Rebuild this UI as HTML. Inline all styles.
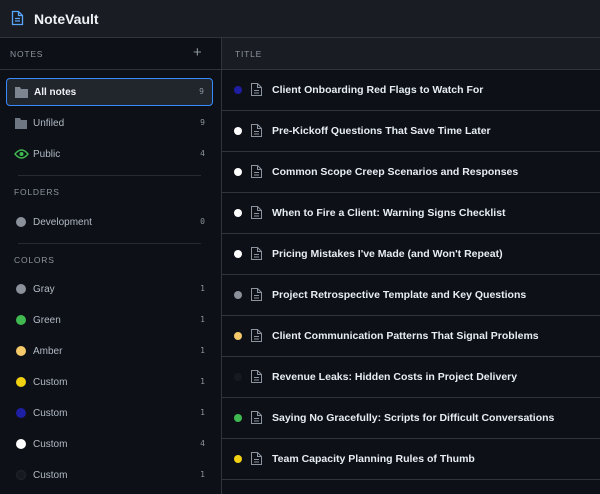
<!DOCTYPE html>
<html><head><style>
*{margin:0;padding:0;box-sizing:border-box}
body{width:600px;height:494px;overflow:hidden;background:#0d1017;font-family:"Liberation Sans","DejaVu Sans",sans-serif;color:#c9d1d9;position:relative}
.top{position:absolute;left:0;top:0;width:600px;height:38px;background:#191c23;border-bottom:1px solid #30343b}
.top .t{position:absolute;left:34px;top:11px;font-size:14px;font-weight:bold;color:#f0f3f6}
.side{position:absolute;left:0;top:38px;width:222px;height:456px;border-right:1px solid #30343b}
.sh{height:32px;border-bottom:1px solid #30343b;position:relative}
.lab{position:absolute;font-size:8.5px;letter-spacing:.8px;color:#8b949e}
.it{position:absolute;left:6px;width:207px;height:28px;font-size:10px;color:#b1bac4}
.it .n{position:absolute;left:27px;top:9px}
.it .c{position:absolute;right:8px;top:9px;font-family:"DejaVu Sans Mono",monospace;font-size:8px;color:#8b949e}
.dot{position:absolute;left:10px;top:9px;width:10px;height:10px;border-radius:50%}
.sep{position:absolute;left:18px;width:183px;height:1px;background:#262a31}
.main{position:absolute;left:222px;top:38px;width:378px;height:456px}
.th{height:32px;background:#191c23;border-bottom:1px solid #30343b;position:relative}
.row{height:41px;border-bottom:1px solid #30343b;position:relative}
.row .d{position:absolute;left:12px;top:16px;width:8px;height:8px;border-radius:50%}
.row svg{position:absolute;left:29px;top:13px}
.row .x{position:absolute;left:50px;top:14px;font-size:10.5px;font-weight:bold;color:#e6edf3}
</style></head><body>
<div class="top">
<svg style="position:absolute;left:11px;top:10px" width="13" height="16" viewBox="0 0 13 16"><path d="M1.5 1.5h6l4 4v9h-10z M7.5 1.5v4h4 M4 8.5h5 M4 11h5" fill="none" stroke="#58a6ff" stroke-width="1.3"/></svg>
<div class="t">NoteVault</div></div>
<div class="side">
<div class="sh"><span class="lab" style="left:10px;top:11px">NOTES</span><span style="position:absolute;left:193px;top:6px;font-size:15px;color:#8b949e">+</span></div>
<div class="it" style="top:40px;background:#21262d;border:1px solid #388bfd;border-radius:4px"><svg style="position:absolute;left:8px;top:8px" width="13" height="11"><path d="M0 0h5l1 2h7v9h-13z" fill="#7d8590"/></svg><span class="n" style="color:#f0f3f6;font-weight:bold;top:8px">All notes</span><span class="c" style="top:8px">9</span></div>
<div class="it" style="top:71px"><svg style="position:absolute;left:9px;top:9px" width="12" height="11"><path d="M0 0h5l1 2h6v9h-12z" fill="#6e7681"/></svg><span class="n">Unfiled</span><span class="c">9</span></div>
<div class="it" style="top:102px"><svg style="position:absolute;left:8px;top:9px" width="15" height="10"><path d="M1 5Q7.5-3 14 5Q7.5 13 1 5z" fill="none" stroke="#3fb950" stroke-width="1.4"/><circle cx="7.5" cy="5" r="2" fill="#3fb950"/></svg><span class="n">Public</span><span class="c">4</span></div>
<div class="sep" style="top:137px"></div>
<span class="lab" style="left:14px;top:149px">FOLDERS</span>
<div class="it" style="top:170px"><span class="dot" style="background:#8b919a"></span><span class="n">Development</span><span class="c">0</span></div>
<div class="sep" style="top:205px"></div>
<span class="lab" style="left:14px;top:217px">COLORS</span>
<div class="it" style="top:237px"><span class="dot" style="background:#8b919a"></span><span class="n">Gray</span><span class="c">1</span></div>
<div class="it" style="top:268px"><span class="dot" style="background:#3fb950"></span><span class="n">Green</span><span class="c">1</span></div>
<div class="it" style="top:299px"><span class="dot" style="background:#f5c86a"></span><span class="n">Amber</span><span class="c">1</span></div>
<div class="it" style="top:330px"><span class="dot" style="background:#f2d113"></span><span class="n">Custom</span><span class="c">1</span></div>
<div class="it" style="top:361px"><span class="dot" style="background:#1f1fa3"></span><span class="n">Custom</span><span class="c">1</span></div>
<div class="it" style="top:392px"><span class="dot" style="background:#fff"></span><span class="n">Custom</span><span class="c">4</span></div>
<div class="it" style="top:423px"><span class="dot" style="background:#161a20;border:1px solid #22262d"></span><span class="n">Custom</span><span class="c">1</span></div>
</div>
<div class="main">
<div class="th"><span class="lab" style="left:13px;top:11px;font-size:8.5px">TITLE</span></div>
<div class="row"><span class="d" style="background:#1f1fa3"></span><svg width="11" height="13"><path d="M.5.5h6l4 4v8h-10z M6.5.5v4h4 M3 7.5h5 M3 10h5" fill="none" stroke="#8b949e"/></svg><span class="x">Client Onboarding Red Flags to Watch For</span></div>
<div class="row"><span class="d" style="background:#fff"></span><svg width="11" height="13"><path d="M.5.5h6l4 4v8h-10z M6.5.5v4h4 M3 7.5h5 M3 10h5" fill="none" stroke="#8b949e"/></svg><span class="x">Pre-Kickoff Questions That Save Time Later</span></div>
<div class="row"><span class="d" style="background:#fff"></span><svg width="11" height="13"><path d="M.5.5h6l4 4v8h-10z M6.5.5v4h4 M3 7.5h5 M3 10h5" fill="none" stroke="#8b949e"/></svg><span class="x">Common Scope Creep Scenarios and Responses</span></div>
<div class="row"><span class="d" style="background:#fff"></span><svg width="11" height="13"><path d="M.5.5h6l4 4v8h-10z M6.5.5v4h4 M3 7.5h5 M3 10h5" fill="none" stroke="#8b949e"/></svg><span class="x">When to Fire a Client: Warning Signs Checklist</span></div>
<div class="row"><span class="d" style="background:#fff"></span><svg width="11" height="13"><path d="M.5.5h6l4 4v8h-10z M6.5.5v4h4 M3 7.5h5 M3 10h5" fill="none" stroke="#8b949e"/></svg><span class="x">Pricing Mistakes I've Made (and Won't Repeat)</span></div>
<div class="row"><span class="d" style="background:#8b919a"></span><svg width="11" height="13"><path d="M.5.5h6l4 4v8h-10z M6.5.5v4h4 M3 7.5h5 M3 10h5" fill="none" stroke="#8b949e"/></svg><span class="x">Project Retrospective Template and Key Questions</span></div>
<div class="row"><span class="d" style="background:#f5c86a"></span><svg width="11" height="13"><path d="M.5.5h6l4 4v8h-10z M6.5.5v4h4 M3 7.5h5 M3 10h5" fill="none" stroke="#8b949e"/></svg><span class="x">Client Communication Patterns That Signal Problems</span></div>
<div class="row"><span class="d" style="background:#161a20"></span><svg width="11" height="13"><path d="M.5.5h6l4 4v8h-10z M6.5.5v4h4 M3 7.5h5 M3 10h5" fill="none" stroke="#8b949e"/></svg><span class="x">Revenue Leaks: Hidden Costs in Project Delivery</span></div>
<div class="row"><span class="d" style="background:#3fb950"></span><svg width="11" height="13"><path d="M.5.5h6l4 4v8h-10z M6.5.5v4h4 M3 7.5h5 M3 10h5" fill="none" stroke="#8b949e"/></svg><span class="x">Saying No Gracefully: Scripts for Difficult Conversations</span></div>
<div class="row"><span class="d" style="background:#f2d113"></span><svg width="11" height="13"><path d="M.5.5h6l4 4v8h-10z M6.5.5v4h4 M3 7.5h5 M3 10h5" fill="none" stroke="#8b949e"/></svg><span class="x">Team Capacity Planning Rules of Thumb</span></div>
</div>
</body></html>
